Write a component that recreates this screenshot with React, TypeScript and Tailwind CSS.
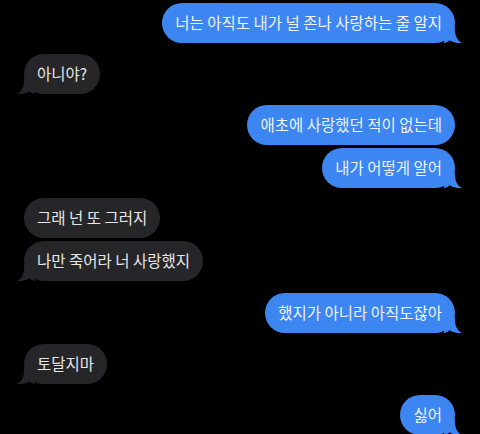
const messages = [
  { id: 1, me: true, text: '너는 아직도 내가 널 존나 사랑하는 줄 알지', tail: true, gap: 'mt-[3px]' },
  { id: 2, me: false, text: '아니야?', tail: true, gap: 'mt-[11px]' },
  { id: 3, me: true, text: '애초에 사랑했던 적이 없는데', tail: false, gap: 'mt-[11px]' },
  { id: 4, me: true, text: '내가 어떻게 알어', tail: true, gap: 'mt-[3px]' },
  { id: 5, me: false, text: '그래 넌 또 그러지', tail: false, gap: 'mt-[10px]' },
  { id: 6, me: false, text: '나만 죽어라 너 사랑했지', tail: true, gap: 'mt-[3px]' },
  { id: 7, me: true, text: '했지가 아니라 아직도잖아', tail: true, gap: 'mt-[12px]' },
  { id: 8, me: false, text: '토달지마', tail: true, gap: 'mt-[11px]' },
  { id: 9, me: true, text: '싫어', tail: true, gap: 'mt-[11px]' },
];

function Tail({ me }: { me: boolean }) {
  return (
    <svg
      width="18"
      height="16"
      viewBox="0 0 20 18"
      className={me ? 'absolute bottom-0 -right-[7px]' : 'absolute bottom-0 -left-[7px] -scale-x-100'}
    >
      <path
        d="M0 0 L12 0 C12 9 14 15 20 18 C15 18.5 10 17.5 6 15 C4 17 2 18 0 18 Z"
        fill={me ? '#3d86f2' : '#262629'}
      />
    </svg>
  );
}

export default function App() {
  return (
    <div className="w-[480px] h-[434px] bg-black overflow-hidden flex flex-col pl-[24px] pr-[25px] font-['Noto_Sans_CJK_KR','Noto_Sans',sans-serif]">
      {messages.map((m) => (
        <div key={m.id} className={`${m.gap} flex ${m.me ? 'justify-end' : 'justify-start'}`}>
          <div
            className={`relative h-[40px] px-[13px] flex items-center rounded-[20px] text-[15.5px] leading-none whitespace-nowrap ${
              m.me ? 'bg-[#3d86f2] text-[#eef3fb]' : 'bg-[#262629] text-[#e6e6e6]'
            }`}
          >
            {m.tail && <Tail me={m.me} />}
            <span className="relative">{m.text}</span>
          </div>
        </div>
      ))}
    </div>
  );
}
